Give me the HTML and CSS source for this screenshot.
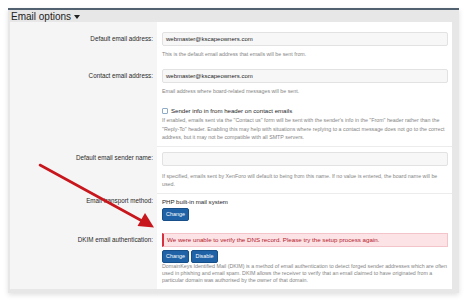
FILE: index.html
```html
<!DOCTYPE html>
<html lang="en">
<head>
    <meta charset="UTF-8">
    <meta name="viewport" content="width=device-width, initial-scale=1.0">
    <title>Email options</title>
    <link rel="stylesheet" href="styles.css">
</head>
<body>

    <div class="page">
        <div class="block">
            <h2 class="block-header">Email options <span class="caret"></span></h2>

            <div class="block-body">
                <div class="row row--first">
                    <div class="row-label label-input">Default email address:</div>
                    <div class="row-value">
                        <div class="input">webmaster@kscapeowners.com</div>
                        <p class="hint">This is the default email address that emails will be sent from.</p>
                    </div>
                </div>

                <div class="row row--second">
                    <div class="row-label label-input">Contact email address:</div>
                    <div class="row-value">
                        <div class="input">webmaster@kscapeowners.com</div>
                        <p class="hint">Email address where board-related messages will be sent.</p>
                    </div>
                </div>

                <div class="row row--check">
                    <div class="row-label"></div>
                    <div class="row-value">
                        <label class="check"><span class="check-box"></span>Sender info in from header on contact emails</label>
                        <p class="hint hint--check">If enabled, emails sent via the "Contact us" form will be sent with the sender's info in the "From" header rather than the "Reply-To" header. Enabling this may help with situations where replying to a contact message does not go to the correct address, but it may not be compatible with all SMTP servers.</p>
                    </div>
                </div>

                <div class="row row--sender">
                    <div class="row-label label-input">Default email sender name:</div>
                    <div class="row-value separated">
                        <div class="input"></div>
                        <p class="hint hint--sender">If specified, emails sent by XenForo will default to being from this name. If no value is entered, the board name will be used.</p>
                    </div>
                </div>

                <div class="row row--transport">
                    <div class="row-label label-text">Email transport method:</div>
                    <div class="row-value separated">
                        <div class="value-text">PHP built-in mail system</div>
                        <div class="buttons">
                            <button class="btn">Change</button>
                        </div>
                    </div>
                </div>

                <div class="row row--dkim">
                    <div class="row-label label-error">DKIM email authentication:</div>
                    <div class="row-value">
                        <div class="message-error">We were unable to verify the DNS record. Please try the setup process again.</div>
                        <div class="buttons">
                            <button class="btn">Change</button>
                            <button class="btn">Disable</button>
                        </div>
                        <p class="hint hint--dkim">DomainKeys Identified Mail (DKIM) is a method of email authentication to detect forged sender addresses which are often used in phishing and email spam. DKIM allows the receiver to verify that an email claimed to have originated from a particular domain was authorised by the owner of that domain.</p>
                    </div>
                </div>
            </div>
        </div>

        <!-- annotation arrow drawn over the form -->
        <svg class="arrow" width="467" height="300" viewBox="0 0 467 300">
            <line x1="40" y1="165" x2="144" y2="222" stroke="#c8161d" stroke-width="2.6" stroke-linecap="round"/>
            <polygon points="154,227.5 137.5,226 145,213" fill="#c8161d"/>
        </svg>
    </div>

</body>
</html>
```

FILE: styles.css
```css
* {
    margin: 0;
    padding: 0;
    box-sizing: border-box;
    font-family: 'Liberation Sans', Arial, sans-serif;
}

body {
    background-color: #ffffff;
    width: 467px;
    height: 300px;
    overflow: hidden;
}

.page {
    position: relative;
    width: 467px;
    height: 300px;
    padding-top: 8px;
}

.block {
    margin-left: 8px;
    width: 451px;
    background-color: #e7e7e7;
    border-top: 2px solid #52616f;
    padding: 0 7px 4px 2px;
    box-shadow: 0 2px 5px rgba(0, 0, 0, 0.12);
}

.block-header {
    height: 12px;
    font-size: 10px;
    line-height: 11px;
    font-weight: normal;
    color: #222;
    padding-left: 1px;
    display: flex;
    align-items: center;
    gap: 3px;
}

.caret {
    width: 0;
    height: 0;
    border-left: 3px solid transparent;
    border-right: 3px solid transparent;
    border-top: 4px solid #222;
    margin-top: 1px;
}

.block-body {
    background-color: #ffffff;
}

.row {
    display: grid;
    grid-template-columns: 147px 1fr;
}

.row-label {
    background-color: #f5f5f5;
    text-align: right;
    padding-right: 4px;
    font-size: 6.3px;
    color: #2a2a2a;
}

.row-value {
    padding-left: 5px;
    padding-right: 4px;
}

.separated {
    border-top: 1px solid #ececec;
}

.label-input {
    line-height: 14px;
}

.label-text {
    line-height: 9px;
}

.label-error {
    line-height: 14px;
}

.row--first .row-label,
.row--first .row-value {
    padding-top: 10px;
    padding-bottom: 2px;
}

.row--second .row-label,
.row--second .row-value {
    padding-top: 9px;
    padding-bottom: 6px;
}

.row--check .row-value {
    padding-top: 5px;
    padding-bottom: 4px;
}

.row--sender .row-label,
.row--sender .row-value {
    padding-top: 5px;
    padding-bottom: 5px;
}

.row--transport .row-label,
.row--transport .row-value {
    padding-top: 3px;
    padding-bottom: 11px;
}

.row--dkim .row-label {
    padding-top: 1px;
}

.row--dkim .row-value {
    padding-top: 1px;
    padding-bottom: 5px;
}

.input {
    height: 14px;
    background-color: #f7f7f7;
    border: 1px solid #e2e2e2;
    border-radius: 2px;
    padding-left: 3px;
    font-size: 6px;
    line-height: 12px;
    color: #1e1e1e;
}

.hint {
    font-size: 5.3px;
    line-height: 8px;
    color: #858585;
    margin-top: 4px;
}

.hint--check {
    margin-top: 1px;
    line-height: 8.5px;
}

.hint--sender {
    margin-top: 6px;
}

.hint--dkim {
    margin-top: 0;
    line-height: 7px;
}

.check {
    display: flex;
    align-items: center;
    gap: 3px;
    font-size: 6.1px;
    line-height: 9px;
    color: #1e1e1e;
}

.check-box {
    width: 6px;
    height: 6px;
    border: 1px solid #8eabc8;
    border-radius: 1px;
    background-color: #ffffff;
}

.value-text {
    font-size: 6.1px;
    line-height: 9px;
    color: #1e1e1e;
}

.buttons {
    display: flex;
    gap: 2px;
    margin-top: 2px;
}

.row--dkim .buttons {
    margin-top: 3px;
}

.btn {
    width: 27px;
    height: 13px;
    background-color: #1f63a6;
    border: 1px solid #174f88;
    border-radius: 2px;
    color: #ffffff;
    font-size: 5.4px;
}

.message-error {
    height: 14px;
    background-color: #fbe3e6;
    border: 1px solid #f3c4ca;
    border-left: 2px solid #d6303f;
    padding-left: 3px;
    font-size: 6.2px;
    line-height: 12px;
    color: #b5182a;
}

.arrow {
    position: absolute;
    left: 0;
    top: 0;
    pointer-events: none;
}
```
